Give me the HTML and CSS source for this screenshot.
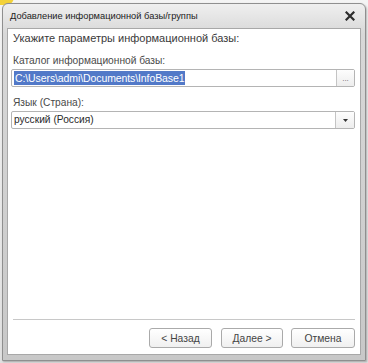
FILE: index.html
```html
<!DOCTYPE html>
<html>
<head>
<meta charset="utf-8">
<link rel="stylesheet" href="styles.css">
</head>
<body>
<div class="desk">
  <div class="blob"></div>
  <div class="window">
    <div class="titlebar">
      <span class="title">Добавление информационной базы/группы</span>
      <svg class="close" width="10" height="10" viewBox="0 0 10 10"><path d="M1.5 1.5 L8.5 8.5 M8.5 1.5 L1.5 8.5" stroke="#2b2b2b" stroke-width="2.2" stroke-linecap="square"/></svg>
    </div>
    <div class="content">
      <div class="form">
        <div class="heading">Укажите параметры информационной базы:</div>
        <div class="label">Каталог информационной базы:</div>
        <div class="field">
          <div class="value"><span class="sel">C:\Users\admi\Documents\InfoBase1</span></div>
          <div class="fbtn dots">...</div>
        </div>
        <div class="label second">Язык (Страна):</div>
        <div class="field">
          <div class="value">русский (Россия)</div>
          <div class="fbtn"><svg width="5" height="3" viewBox="0 0 5 3"><path d="M0 0 H5 L2.5 3 Z" fill="#333"/></svg></div>
        </div>
      </div>
      <div class="footer">
        <div class="btn back">&lt; Назад</div>
        <div class="btn next">Далее &gt;</div>
        <div class="btn cancel">Отмена</div>
      </div>
    </div>
  </div>
</div>
</body>
</html>
```
FILE: styles.css
```css
html, body {
  margin: 0;
  padding: 0;
}
body {
  width: 368px;
  height: 363px;
  overflow: hidden;
  background: #dcdcdc;
  font-family: "Liberation Sans", Arial, sans-serif;
}
.desk {
  position: relative;
  width: 368px;
  height: 363px;
  padding: 3px 2px 0 2px;
  box-sizing: border-box;
  background: linear-gradient(#f4f4f4, #e0e0e0);
}
.blob {
  position: absolute;
  left: 0;
  top: -6px;
  width: 14px;
  height: 11px;
  border-radius: 0 0 8px 0;
  background: #f3d23a;
}
.window {
  position: relative;
  width: 364px;
  height: 358px;
  box-sizing: border-box;
  border: 1px solid #8f8f8f;
  border-radius: 6px 6px 0 0;
  background: linear-gradient(#efefef, #d8d8d8 30px, #c8c8c8);
  padding: 0 4px 5px 4px;
  display: flex;
  flex-direction: column;
  box-shadow: 1px 1px 2px rgba(0,0,0,0.25);
}
.titlebar {
  height: 24px;
  display: flex;
  align-items: center;
  justify-content: space-between;
  padding: 0 6px 0 3px;
  flex: none;
}
.title {
  font-size: 9.3px;
  color: #222;
}
.close {
  display: block;
}
.content {
  flex: 1;
  background: #fff;
  border: 1px solid #a8a8a8;
  display: flex;
  flex-direction: column;
  padding: 0 5px 0 3px;
}
.form {
  flex: 1;
  display: flex;
  flex-direction: column;
}
.heading {
  font-size: 11px;
  color: #3a3a3a;
  margin: 2px 0 0 2px;
  line-height: 15px;
}
.label {
  font-size: 10.2px;
  color: #4a4a4a;
  margin: 7px 0 0 2px;
  line-height: 15px;
}
.label.second {
  margin-top: 8px;
}
.field {
  margin-top: 1px;
  height: 18px;
  box-sizing: border-box;
  border: 1px solid #b4b4b4;
  border-radius: 2px;
  display: flex;
  background: #fff;
}
.value {
  flex: 1;
  font-size: 10.2px;
  color: #2a2a2a;
  line-height: 16px;
  padding-left: 2px;
  white-space: nowrap;
  overflow: hidden;
}
.sel {
  background: #5279c8;
  color: #fff;
  padding: 1px 1px;
  font-size: 10.5px;
  letter-spacing: -0.1px;
}
.fbtn {
  width: 18px;
  border-left: 1px solid #c4c4c4;
  background: linear-gradient(#fdfdfd, #ededed);
  display: flex;
  align-items: center;
  justify-content: center;
  font-size: 8px;
  color: #666;
}
.dots {
  align-items: flex-end;
  padding-bottom: 3px;
  box-sizing: border-box;
  line-height: 8px;
}
.footer {
  flex: none;
  border-top: 1px solid #c8c8c8;
  margin-left: 2px;
  height: 35px;
  display: flex;
  justify-content: flex-end;
  align-items: flex-start;
  gap: 9px;
  padding-top: 8px;
  box-sizing: border-box;
}
.btn {
  height: 20px;
  box-sizing: border-box;
  border: 1px solid #aaaaaa;
  border-radius: 3px;
  background: linear-gradient(#ffffff, #f0f0f0);
  font-size: 10.3px;
  color: #444;
  display: flex;
  align-items: center;
  justify-content: center;
}
.back { width: 63px; }
.next { width: 62px; }
.cancel { width: 64px; margin-left: -1px; }
```
